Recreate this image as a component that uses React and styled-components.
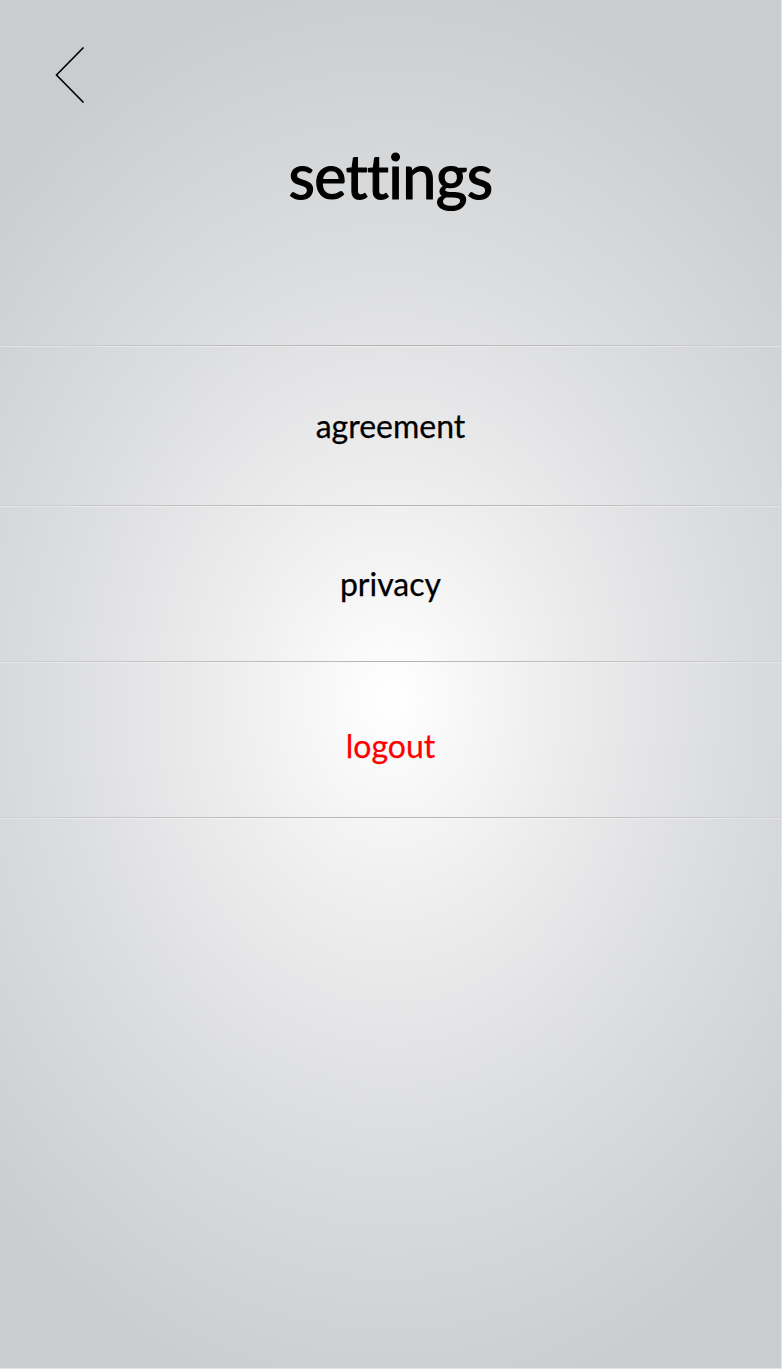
import React from 'react';
import styled, { createGlobalStyle } from 'styled-components';

const GlobalStyle = createGlobalStyle`
  html, body {
    margin: 0;
    padding: 0;
  }
  body {
    font-family: Lato, "Noto Sans", sans-serif;
    background: #cbccce;
  }
`;

const Screen = styled.div`
  min-height: 1369px;
  box-sizing: border-box;
  border-right: 1px solid #e4e4e5;
  border-bottom: 1px solid #e4e4e5;
  background: radial-gradient(
    ellipse 560px 730px at 50% 700px,
    #ffffff 0%,
    #ededee 30%,
    #dcdddf 60%,
    #cbccce 100%
  );
  display: flex;
  flex-direction: column;
`;

const Header = styled.header`
  display: flex;
  flex-direction: column;
  padding: 47px 0 0 55px;
  height: 345px;
  box-sizing: border-box;
`;

const BackButton = styled.button`
  align-self: flex-start;
  background: none;
  border: 0;
  padding: 0;
  width: 30px;
  height: 56px;
  cursor: pointer;

  & > svg {
    display: block;
  }
`;

const Title = styled.h1`
  margin: 42px 55px 0 0;
  text-align: center;
  font-size: 61px;
  font-weight: 400;
  line-height: 1;
  color: #000;
  letter-spacing: -0.6px;
  -webkit-text-stroke: 1.2px #000;
`;

const Divider = styled.div`
  height: 1px;
  background: linear-gradient(to right, #cfd0d1 0%, #bdbdbe 30%, #b3b3b3 50%, #bdbdbe 70%, #cfd0d1 100%);
  box-shadow: 0 1px 0 rgba(255, 255, 255, 0.35);
`;

const Row = styled.button`
  display: flex;
  align-items: center;
  justify-content: center;
  height: ${(p) => p.$height}px;
  padding: ${(p) => p.$shift}px 0 0 0;
  box-sizing: border-box;
  background: none;
  border: 0;
  width: 100%;
  font-family: Lato, "Noto Sans", sans-serif;
  font-size: 32px;
  font-weight: 400;
  letter-spacing: 0;
  -webkit-text-stroke: 0.25px currentColor;
  color: ${(p) => (p.$danger ? '#ff0000' : '#000')};
  cursor: pointer;
`;

const items = [
  { label: 'agreement', height: 159, shift: 0 },
  { label: 'privacy', height: 155, shift: 0 },
  { label: 'logout', height: 155, shift: 12, danger: true },
];

export default function App() {
  return (
    <>
      <GlobalStyle />
      <Screen>
        <Header>
          <BackButton aria-label="back">
            <svg width="30" height="56" viewBox="0 0 30 56">
              <path d="M28.5 0.5 L1.5 28 L28.5 55.5" fill="none" stroke="#000" strokeWidth="1.6" />
            </svg>
          </BackButton>
          <Title>settings</Title>
        </Header>
        <Divider />
        {items.map((it) => (
          <React.Fragment key={it.label}>
            <Row $height={it.height} $shift={it.shift} $danger={it.danger}>
              {it.label}
            </Row>
            <Divider />
          </React.Fragment>
        ))}
      </Screen>
    </>
  );
}
